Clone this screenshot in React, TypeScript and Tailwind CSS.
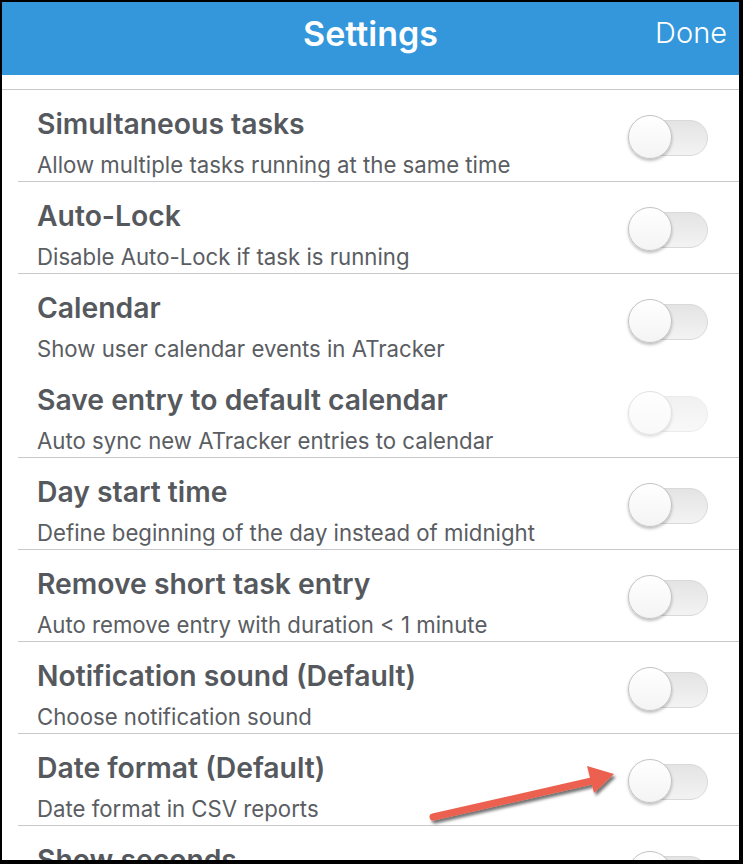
import React from 'react';

type Row = {
  title: string;
  desc?: string;
  disabled?: boolean;
  divider?: boolean;
};

const rows: Row[] = [
  { title: 'Simultaneous tasks', desc: 'Allow multiple tasks running at the same time', divider: true },
  { title: 'Auto-Lock', desc: 'Disable Auto-Lock if task is running', divider: true },
  { title: 'Calendar', desc: 'Show user calendar events in ATracker', divider: false },
  { title: 'Save entry to default calendar', desc: 'Auto sync new ATracker entries to calendar', disabled: true, divider: true },
  { title: 'Day start time', desc: 'Define beginning of the day instead of midnight', divider: true },
  { title: 'Remove short task entry', desc: 'Auto remove entry with duration < 1 minute', divider: true },
  { title: 'Notification sound (Default)', desc: 'Choose notification sound', divider: true },
  { title: 'Date format (Default)', desc: 'Date format in CSV reports', divider: true },
  { title: 'Show seconds', desc: 'Show seconds in timers', divider: true },
];

function Toggle({ disabled }: { disabled?: boolean }) {
  return (
    <div className={`relative w-[80px] h-[44px] shrink-0 ${disabled ? 'opacity-50' : ''}`}>
      <div className="absolute right-0 top-[5px] w-[68px] h-[36px] rounded-full border border-[#d9d9d9] bg-gradient-to-b from-[#e4e4e4] to-[#f3f3f3]" />
      <div className="absolute left-0 top-0 w-[44px] h-[44px] rounded-full border border-[#c4c4c4] bg-gradient-to-b from-white to-[#f4f4f4] shadow-[0_2px_3px_rgba(0,0,0,0.25)]" />
    </div>
  );
}

function SettingRow({ row }: { row: Row }) {
  return (
    <div className={`ml-4 h-[92px] shrink-0 flex items-start pl-[19px] pr-[31px] ${row.divider ? 'border-b border-[#c8c8cc]' : 'border-b border-transparent'}`}>
      <div className="flex-1 pt-[18px] whitespace-nowrap">
        <p className="text-[28.3px] leading-[32px] font-semibold text-[#55595e]">{row.title}</p>
        <p className="mt-[12px] text-[22.2px] leading-[26px] text-[#5a5d62]">{row.desc}</p>
      </div>
      <div className="pt-[25px]">
        <Toggle disabled={row.disabled} />
      </div>
    </div>
  );
}

export default function App() {
  return (
    <div
      className="relative w-[743px] h-[864px] bg-black pt-[2px] pl-[2px] pr-[4px] pb-[4px] overflow-hidden"
      style={{ fontFamily: 'Inter, "Liberation Sans", sans-serif' }}
    >
      <div className="bg-white h-full flex flex-col overflow-hidden">
        {/* nav bar */}
        <div className="h-[73px] shrink-0 bg-[#3497dc] relative flex items-center justify-center pb-[10px]">
          <h1 className="text-[34px] leading-[40px] font-semibold text-white">Settings</h1>
          <span className="absolute right-[12px] top-[13px] text-[29px] leading-[36px] text-white font-light">Done</span>
        </div>

        <div className="h-[15px] shrink-0 border-b border-[#c8c8cc]" />

        {rows.map((r) => (
          <SettingRow key={r.title} row={r} />
        ))}
      </div>

      {/* annotation arrow */}
      <svg className="absolute left-0 top-0 pointer-events-none" width="743" height="864" viewBox="0 0 743 864">
        <defs>
          <filter id="sh" x="-20%" y="-50%" width="140%" height="200%">
            <feDropShadow dx="2" dy="3" stdDeviation="1.5" floodColor="#000" floodOpacity="0.55" />
          </filter>
        </defs>
        <g filter="url(#sh)">
          <line x1="433" y1="817" x2="596" y2="780" stroke="#ec604f" strokeWidth="7" strokeLinecap="round" />
          <polygon points="587,766 614,774 594,793" fill="#ec604f" />
        </g>
      </svg>
    </div>
  );
}
